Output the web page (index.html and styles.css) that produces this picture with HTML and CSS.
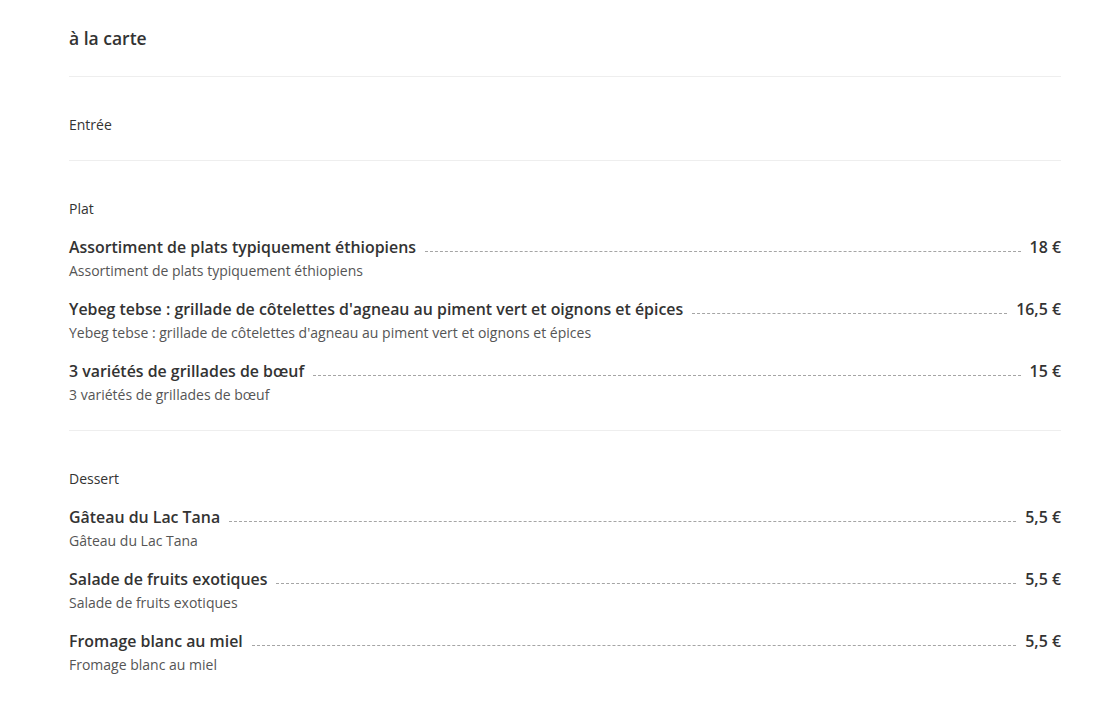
FILE: index.html
```html
<!DOCTYPE html>
<html lang="fr">
<head>
<meta charset="utf-8">
<title>à la carte</title>
<link rel="stylesheet" href="styles.css">
</head>
<body>
<div class="menu">
  <h1 class="menu-title">à la carte</h1>

  <section class="course">
    <h2 class="course-name">Entrée</h2>
  </section>

  <section class="course">
    <h2 class="course-name">Plat</h2>
    <div class="dish">
      <div class="dish-head"><span class="dish-name">Assortiment de plats typiquement éthiopiens</span><span class="leader"></span><span class="dish-price">18 €</span></div>
      <p class="dish-desc">Assortiment de plats typiquement éthiopiens</p>
    </div>
    <div class="dish">
      <div class="dish-head"><span class="dish-name">Yebeg tebse : grillade de côtelettes d'agneau au piment vert et oignons et épices</span><span class="leader"></span><span class="dish-price">16,5 €</span></div>
      <p class="dish-desc">Yebeg tebse : grillade de côtelettes d'agneau au piment vert et oignons et épices</p>
    </div>
    <div class="dish">
      <div class="dish-head"><span class="dish-name">3 variétés de grillades de bœuf</span><span class="leader"></span><span class="dish-price">15 €</span></div>
      <p class="dish-desc">3 variétés de grillades de bœuf</p>
    </div>
  </section>

  <section class="course last">
    <h2 class="course-name">Dessert</h2>
    <div class="dish">
      <div class="dish-head"><span class="dish-name">Gâteau du Lac Tana</span><span class="leader"></span><span class="dish-price">5,5 €</span></div>
      <p class="dish-desc">Gâteau du Lac Tana</p>
    </div>
    <div class="dish">
      <div class="dish-head"><span class="dish-name">Salade de fruits exotiques</span><span class="leader"></span><span class="dish-price">5,5 €</span></div>
      <p class="dish-desc">Salade de fruits exotiques</p>
    </div>
    <div class="dish">
      <div class="dish-head"><span class="dish-name">Fromage blanc au miel</span><span class="leader"></span><span class="dish-price">5,5 €</span></div>
      <p class="dish-desc">Fromage blanc au miel</p>
    </div>
  </section>
</div>
</body>
</html>
```
FILE: styles.css
```css
* { box-sizing: border-box; }
html, body { margin: 0; padding: 0; background: #fff; }
body {
  font-family: "Open Sans", "Liberation Sans", sans-serif;
  color: #333;
}
.menu {
  padding: 0 43px 0 69px;
}
.menu-title {
  margin: 0;
  padding: 26px 0 26px;
  font-size: 17.5px;
  line-height: 24px;
  font-weight: 600;
  color: #333;
  border-bottom: 1px solid #eee;
}
.course {
  padding: 38px 0 25px;
  border-bottom: 1px solid #eee;
}
.course.last { border-bottom: none; }
.course-name {
  margin: 0;
  font-size: 14px;
  line-height: 20px;
  font-weight: 400;
  color: #333;
}
.dish { margin-top: 17px; }
.dish + .dish { margin-top: 17px; }
.dish-head {
  display: flex;
  align-items: baseline;
  font-size: 15.9px;
  line-height: 22px;
  font-weight: 600;
  color: #333;
}
.leader {
  flex: 1;
  border-bottom: 1px dashed #a5a5a5;
  margin: 0 9px;
  position: relative;
  top: -1px;
}
.dish-price { white-space: nowrap; }
.dish-desc {
  margin: 3px 0 0;
  font-size: 14px;
  line-height: 20px;
  color: #555;
}
```
